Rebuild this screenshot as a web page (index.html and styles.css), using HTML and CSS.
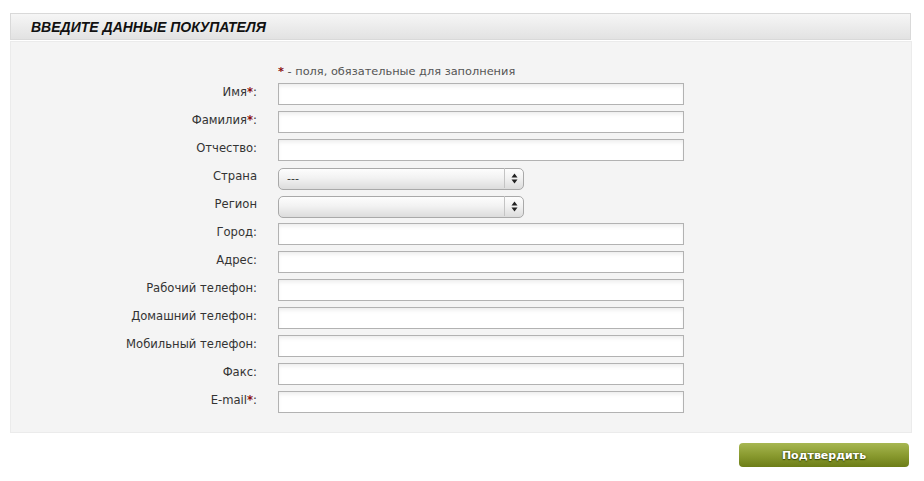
FILE: index.html
```html
<!DOCTYPE html>
<html lang="ru">
<head>
  <meta charset="UTF-8">
  <title>Данные покупателя</title>
  <link rel="stylesheet" href="styles.css">
</head>
<body>
  <div class="page">
    <div class="box-head">Введите данные покупателя</div>

    <form class="box-body">
      <div class="note"><span class="req">*</span> - поля, обязательные для заполнения</div>

      <div class="row">
        <label>Имя<span class="req">*</span>:</label>
        <input type="text" class="field">
      </div>
      <div class="row">
        <label>Фамилия<span class="req">*</span>:</label>
        <input type="text" class="field">
      </div>
      <div class="row">
        <label>Отчество:</label>
        <input type="text" class="field">
      </div>
      <div class="row">
        <label>Страна</label>
        <span class="select-wrap">
          <select class="select"><option>---</option></select>
          <span class="arrows">
            <svg width="7" height="11" viewBox="0 0 7 11"><path d="M3.5 0.5 L6.5 4.5 L0.5 4.5 Z M3.5 10.5 L6.5 6.5 L0.5 6.5 Z" fill="#222"/></svg>
          </span>
        </span>
      </div>
      <div class="row">
        <label>Регион</label>
        <span class="select-wrap">
          <select class="select"><option></option></select>
          <span class="arrows">
            <svg width="7" height="11" viewBox="0 0 7 11"><path d="M3.5 0.5 L6.5 4.5 L0.5 4.5 Z M3.5 10.5 L6.5 6.5 L0.5 6.5 Z" fill="#222"/></svg>
          </span>
        </span>
      </div>
      <div class="row">
        <label>Город:</label>
        <input type="text" class="field">
      </div>
      <div class="row">
        <label>Адрес:</label>
        <input type="text" class="field">
      </div>
      <div class="row">
        <label>Рабочий телефон:</label>
        <input type="text" class="field">
      </div>
      <div class="row">
        <label>Домашний телефон:</label>
        <input type="text" class="field">
      </div>
      <div class="row">
        <label>Мобильный телефон:</label>
        <input type="text" class="field">
      </div>
      <div class="row">
        <label>Факс:</label>
        <input type="text" class="field">
      </div>
      <div class="row">
        <label>E-mail<span class="req">*</span>:</label>
        <input type="text" class="field">
      </div>
    </form>

    <div class="actions">
      <button type="button" class="btn-submit">Подтвердить</button>
    </div>
  </div>
</body>
</html>
```

FILE: styles.css
```css
/* Общее */
body {
  margin: 0;
  background: #fff;
  font-family: "DejaVu Sans", Verdana, sans-serif;
  color: #333;
}

.page {
  width: 902px;
  padding: 13px 0 0 10px;
}

/* Заголовок блока */
.box-head {
  width: 879px;
  height: 25px;
  padding-left: 20px;
  border: 1px solid #d9d9d9;
  background: linear-gradient(#f6f6f6, #e2e2e2);
  font-family: "Liberation Sans", Arial, sans-serif;
  font-size: 14px;
  font-weight: bold;
  font-style: italic;
  text-transform: uppercase;
  line-height: 26px;
  color: #111;
}

/* Форма */
.box-body {
  margin: 1px 0 0;
  padding: 21px 0 19px;
  border: 1px solid #ebebeb;
  background: #f4f4f4;
}

.note {
  margin-left: 267px;
  font-size: 11.35px;
  line-height: 16px;
  color: #555;
  margin-bottom: 4px;
}

.req {
  color: #8b1111;
  font-weight: bold;
}

.row {
  display: flex;
  align-items: center;
  height: 22px;
  margin-bottom: 6px;
}

.row:last-child {
  margin-bottom: 0;
}

.row label {
  width: 246px;
  margin-right: 21px;
  padding-bottom: 4px;
  text-align: right;
  font-size: 11.6px;
  color: #333;
}

.field {
  box-sizing: border-box;
  width: 406px;
  height: 22px;
  margin: 0;
  border: 1px solid #b2b2b2;
  background: #fff;
  box-shadow: inset 0 3px 4px -1px rgba(0, 0, 0, 0.08);
}

/* Выпадающие списки */
.select-wrap {
  position: relative;
  display: inline-block;
  width: 246px;
  height: 22px;
}

.select {
  appearance: none;
  -webkit-appearance: none;
  box-sizing: border-box;
  width: 100%;
  height: 22px;
  margin: 0;
  padding: 0 0 0 8px;
  border: 1px solid #a9a9a9;
  border-radius: 5px;
  background: linear-gradient(#fdfdfd, #f2f2f2 45%, #dcdcdc);
  font-family: "DejaVu Sans", Verdana, sans-serif;
  font-size: 11px;
  color: #333;
}

.arrows {
  position: absolute;
  top: 1px;
  right: 1px;
  bottom: 1px;
  width: 18px;
  border-left: 1px solid #c4c4c4;
  display: flex;
  align-items: center;
  justify-content: center;
}

/* Кнопка */
.actions {
  display: flex;
  justify-content: flex-end;
  padding: 10px 3px 0 0;
}

.btn-submit {
  width: 170px;
  height: 24px;
  border: 0;
  border-radius: 4px;
  background: linear-gradient(#a7b752, #8a9b30 50%, #6c7d17);
  color: #fff;
  font-family: "DejaVu Sans", Verdana, sans-serif;
  font-size: 11px;
  font-weight: bold;
  text-shadow: 0 0 2px #3c4a05, 0 1px 1px #3c4a05;
  cursor: pointer;
}
```
